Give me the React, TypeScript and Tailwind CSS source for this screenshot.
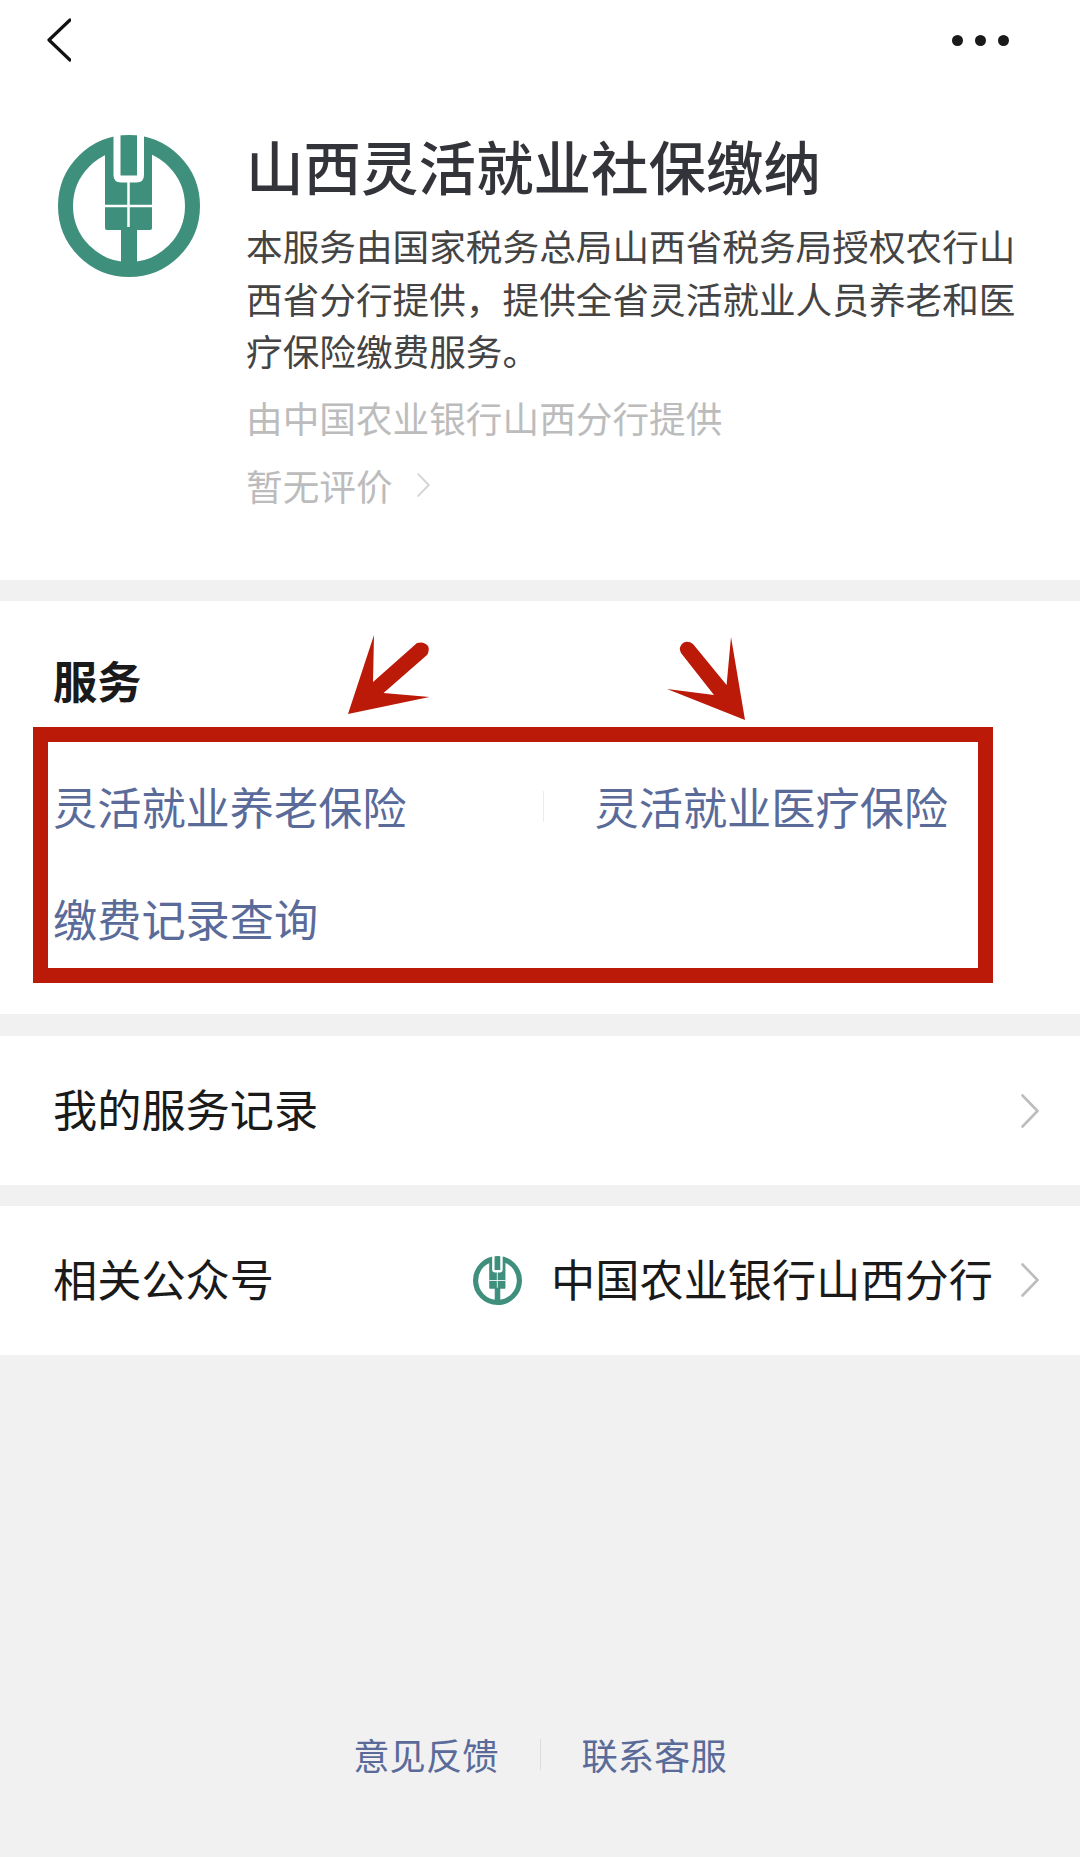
const font = { fontFamily: '"Noto Sans CJK SC", "Noto Sans", sans-serif' };

function Logo({ className }: { className: string }) {
  return (
    <svg viewBox="0 0 142 142" className={className}>
      <circle cx="71" cy="71" r="63.5" fill="#fff" stroke="#3f8f7d" strokeWidth="15" />
      <rect x="47" y="12" width="47" height="83" rx="2" fill="#3f8f7d" />
      <path d="M59 -1V40Q59 44 63 44H78.5Q82.5 44 82.5 40V-1" fill="none" stroke="#fff" strokeWidth="7" />
      <path d="M70.5 46V94M47 71H94" stroke="#fff" strokeWidth="2.5" />
      <rect x="63" y="92" width="16" height="40" fill="#3f8f7d" />
    </svg>
  );
}

function Chevron({ className }: { className: string }) {
  return (
    <svg viewBox="0 0 18 34" className={className} fill="none" stroke="currentColor" strokeWidth="2.6" strokeLinecap="round" strokeLinejoin="round">
      <path d="M1.5 1.5L16.5 17L1.5 32.5" />
    </svg>
  );
}

export default function App() {
  return (
    <div style={font} className="flex min-h-[1857px] w-[1080px] flex-col bg-[#f1f1f1]">
      <section className="h-[580px] bg-white">
        <header className="flex h-[80px] items-center justify-between pl-[47px] pr-[71px]">
          <svg viewBox="0 0 24 44" className="h-[44px] w-[24px]" fill="none" stroke="#111" strokeWidth="3.2" strokeLinecap="round" strokeLinejoin="round">
            <path d="M23 2L2 22L23 42" />
          </svg>
          <div className="flex gap-[12px]">
            <span className="h-[11px] w-[11px] rounded-full bg-[#1a1a1a]" />
            <span className="h-[11px] w-[11px] rounded-full bg-[#1a1a1a]" />
            <span className="h-[11px] w-[11px] rounded-full bg-[#1a1a1a]" />
          </div>
        </header>
        <div className="mt-[55px] flex gap-[46px] pl-[58px]">
          <Logo className="h-[142px] w-[142px] shrink-0" />
          <div className="w-[790px]">
            <h1 className="-mt-[5px] text-[57.5px] font-medium leading-[70px] text-[#33333a]">山西灵活就业社保缴纳</h1>
            <p className="mt-[19px] text-[36.65px] leading-[52.5px] text-[#444444]">
              本服务由国家税务总局山西省税务局授权农行山
              <br />
              西省分行提供，提供全省灵活就业人员养老和医
              <br />
              疗保险缴费服务。
            </p>
            <p className="mt-[14px] text-[36.65px] leading-[52px] text-[#bcbcbc]">由中国农业银行山西分行提供</p>
            <div className="mt-[16px] flex items-center gap-[24px] text-[36.65px] leading-[52px] text-[#bcbcbc]">
              <span>暂无评价</span>
              <Chevron className="h-[24px] w-[13px] text-[#d4d4d4]" />
            </div>
          </div>
        </div>
      </section>

      <section className="relative mt-[21px] bg-white pb-[31px] pt-[49px]">
        <h2 className="pl-[53px] text-[44.2px] font-semibold leading-[60px] text-[#1a1a1a]">服务</h2>
        <div className="ml-[33px] mt-[17px] h-[256px] w-[960px] border-[15px] border-[#bb1a09] pl-[5px] pt-[34px] text-[44.2px] leading-[60px] text-[#5a6b9a]">
          <div className="flex items-center">
            <span>灵活就业养老保险</span>
            <span className="ml-[136px] h-[31px] w-[1px] bg-[#ececec]" />
            <span className="ml-[51px]">灵活就业医疗保险</span>
          </div>
          <div className="mt-[52px]">缴费记录查询</div>
        </div>
        <svg viewBox="0 601 1080 140" className="absolute left-0 top-0 h-[140px] w-[1080px]" fill="#bb1a09">
          <path d="M348 714L374 635L373 682L417 643Q424 641 428 646Q430 650 427 655L383.5 693L429.5 697Z" />
          <path d="M745 720L731 637L726.6 685L693 644Q688 640 683 643Q678 647 681 653L714 695L667 689Z" />
        </svg>
      </section>

      <section className="mt-[22px] flex h-[149px] items-center justify-between bg-white pl-[53px] pr-[41px] text-[44.2px] text-[#1a1a1a]">
        <span className="pb-[4px]">我的服务记录</span>
        <Chevron className="h-[34px] w-[18px] text-[#bdbdbd]" />
      </section>

      <section className="mt-[21px] flex h-[149px] items-center justify-between bg-white pl-[53px] pr-[41px] text-[44.2px] text-[#1a1a1a]">
        <span className="pb-[4px]">相关公众号</span>
        <div className="flex items-center">
          <Logo className="h-[49px] w-[49px]" />
          <span className="ml-[29px] pb-[4px]">中国农业银行山西分行</span>
          <Chevron className="ml-[28px] h-[34px] w-[18px] text-[#bdbdbd]" />
        </div>
      </section>

      <footer className="mt-[379px] flex items-center justify-center text-[36.3px] leading-[40px] text-[#5a6b9a]">
        <span>意见反馈</span>
        <span className="mx-[41px] h-[31px] w-[1px] bg-[#dcdcdc]" />
        <span>联系客服</span>
      </footer>
    </div>
  );
}
